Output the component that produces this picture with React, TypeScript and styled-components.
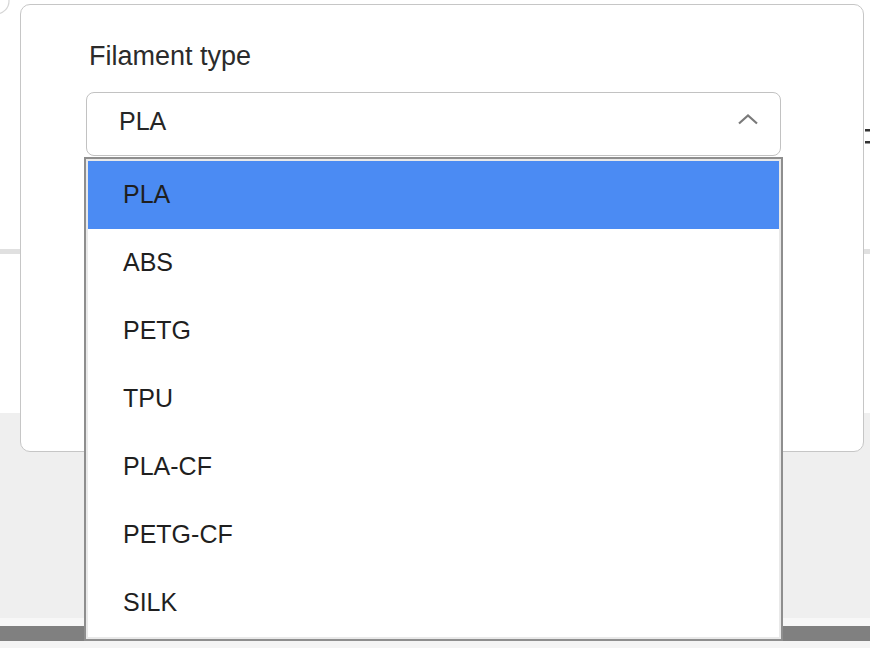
import React, { FC } from 'react';
import styled, { createGlobalStyle } from 'styled-components';

const filaments = ['PLA', 'ABS', 'PETG', 'TPU', 'PLA-CF', 'PETG-CF', 'SILK'];

const GlobalStyle = createGlobalStyle`
  html, body {
    margin: 0;
    padding: 0;
  }

  body {
    font-family: "Liberation Sans", Arial, Helvetica, sans-serif;
    background: #fff;
  }
`;

const Page = styled.div`
  display: flex;
  align-items: flex-start;
  height: 648px;
  overflow: hidden;
  background: linear-gradient(
    to bottom,
    #fff 0 249px,
    #e0e0e0 249px 254px,
    #fff 254px 413px,
    #efefef 413px 618px,
    #f7f7f7 618px 626px,
    #808080 626px 641px,
    #f4f4f4 641px
  );
`;

const LeftGutter = styled.div`
  width: 20px;
  flex: none;
  overflow: hidden;
`;

const RightGutter = styled.div`
  flex: 1;
  padding-top: 129px;
  padding-left: 1px;
`;

const Card = styled.div`
  box-sizing: border-box;
  width: 844px;
  height: 448px;
  margin-top: 4px;
  flex: none;
  padding: 37px 82px 0 65px;
  background: #fff;
  border: 1px solid #c6c6c6;
  border-radius: 10px;
`;

const Label = styled.div`
  margin: 0 0 22px 3px;
  font-size: 27px;
  line-height: 28px;
  color: #2b2b2b;
`;

const SelectWrap = styled.div`
  position: relative;
`;

const SelectBox = styled.div`
  box-sizing: border-box;
  height: 64px;
  display: flex;
  align-items: center;
  justify-content: space-between;
  padding: 0 21px 5px 32px;
  border: 1px solid #c2c2c2;
  border-radius: 8px;
  font-size: 25px;
  color: #262626;
`;

const Chevron = styled.svg`
  width: 22px;
  height: 12px;
  margin-bottom: 5px;
`;

const Menu = styled.ul`
  position: absolute;
  top: calc(100% + 1px);
  left: -2px;
  right: -2px;
  margin: 0;
  padding: 2px;
  list-style: none;
  background: #fff;
  border: 2px solid #8e8e8e;
  box-shadow: inset 0 0 0 2px #e9e9e9;
`;

const Option = styled.li<{ $active?: boolean }>`
  box-sizing: border-box;
  height: 68px;
  display: flex;
  align-items: center;
  padding: 0 0 2px 35px;
  font-size: 25px;
  color: #1f1f1f;
  background: ${(p) => (p.$active ? '#4b8bf3' : 'transparent')};
`;

const Mark = styled.svg`
  width: 5px;
  height: 16px;
  display: block;
`;

const App: FC = () => (
  <Page>
    <GlobalStyle />
    <LeftGutter>
      <svg width="20" height="20" viewBox="0 0 20 20">
        <circle cx="-4" cy="1" r="13" fill="none" stroke="#d6d6d6" strokeWidth="1.2" />
      </svg>
    </LeftGutter>
    <Card>
      <Label>Filament type</Label>
      <SelectWrap>
        <SelectBox>
          <span>PLA</span>
          <Chevron viewBox="0 0 22 12">
            <polyline points="2,10.5 11,2.5 20,10.5" fill="none" stroke="#7a7a7a" strokeWidth="2.2" />
          </Chevron>
        </SelectBox>
        <Menu>
          {filaments.map((name, i) => (
            <Option key={name} $active={i === 0}>{name}</Option>
          ))}
        </Menu>
      </SelectWrap>
    </Card>
    <RightGutter>
      <Mark viewBox="0 0 5 16">
        <rect x="0" y="0" width="5" height="2.5" fill="#333" />
        <rect x="0" y="12" width="5" height="2.5" fill="#333" />
      </Mark>
    </RightGutter>
  </Page>
);

export default App;
